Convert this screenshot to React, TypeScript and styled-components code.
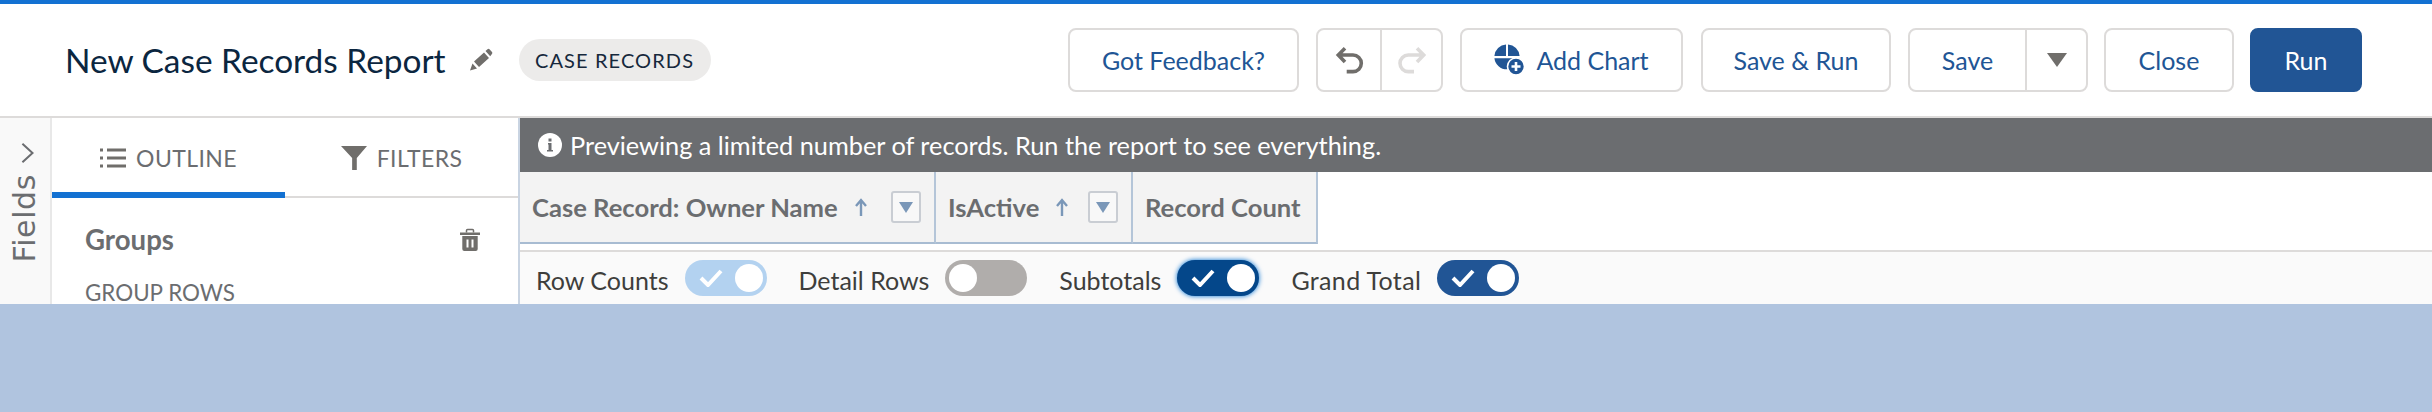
import React, { type FC, type ReactNode } from 'react'
import styled, { createGlobalStyle } from 'styled-components'

const GlobalStyle = createGlobalStyle`
	html, body {
		margin: 0;
		padding: 0;
		background: #b0c4df;
	}
	* {
		box-sizing: border-box;
	}
	body {
		font-family: Lato, 'Open Sans', sans-serif;
	}
`

const Page = styled.div`
	width: 2432px;
	height: 412px;
	background: #b0c4df;
	overflow: hidden;
`

const Builder = styled.div`
	height: 304px;
	background: #fff;
	display: flex;
	flex-direction: column;
	overflow: hidden;
`

const Header = styled.header`
	height: 118px;
	flex: none;
	border-top: 4px solid #1371d2;
	border-bottom: 2px solid #dddbda;
	display: flex;
	align-items: center;
	padding: 0 70px 0 65px;
`

const Title = styled.h1`
	margin: 0;
	font-size: 33.4px;
	font-weight: 400;
	color: #0b2640;
`

const EditIcon = styled.svg`
	width: 24px;
	height: 24px;
	margin-left: 23px;
	color: #706e6b;
`

const Pill = styled.span`
	margin-left: 26px;
	height: 42px;
	width: 192px;
	display: inline-flex;
	align-items: center;
	justify-content: center;
	border-radius: 21px;
	background: #ecebea;
	font-size: 20px;
	letter-spacing: 1.1px;
	color: #16283c;
`

const Actions = styled.div`
	margin-left: auto;
	display: flex;
	gap: 17px;
`

const Button = styled.button<{ $width: number; $primary?: boolean; $nudge?: number }>`
	width: ${({ $width }) => $width}px;
	height: 64px;
	margin-left: ${({ $nudge }) => $nudge ?? 0}px;
	padding: 0;
	display: flex;
	align-items: center;
	justify-content: center;
	gap: 10px;
	border: 2px solid ${({ $primary }) => ($primary ? '#215595' : '#dddbda')};
	border-radius: 8px;
	background: ${({ $primary }) => ($primary ? '#215595' : '#fff')};
	color: ${({ $primary }) => ($primary ? '#fff' : '#215595')};
	font-family: inherit;
	font-size: 25px;
`

const ButtonGroup = styled.div`
	height: 64px;
	display: flex;
	border: 2px solid #dddbda;
	border-radius: 8px;
	background: #fff;
`

const GroupSegment = styled.button<{ $width: number; $divided?: boolean }>`
	width: ${({ $width }) => $width}px;
	padding: 0;
	display: flex;
	align-items: center;
	justify-content: center;
	border: 0;
	border-left: ${({ $divided }) => ($divided ? '2px solid #dddbda' : '0')};
	background: transparent;
	color: #215595;
	font-family: inherit;
	font-size: 25px;
`

const Body = styled.div`
	flex: 1;
	min-height: 0;
	display: flex;
`

const Rail = styled.div`
	width: 52px;
	flex: none;
	border-right: 2px solid #e8e8e8;
	background: #f9f9f9;
	display: flex;
	flex-direction: column;
	align-items: center;
	padding: 24px 0 0 3px;
`

const RailLabel = styled.span`
	margin: 10px 0 0 -4px;
	writing-mode: vertical-rl;
	transform: rotate(180deg);
	font-family: 'DejaVu Sans', sans-serif;
	font-size: 30px;
	line-height: 30px;
	letter-spacing: 0.6px;
	color: #6b6d70;
`

const SidePanel = styled.aside`
	width: 468px;
	flex: none;
	border-right: 2px solid #c9d4e2;
	overflow: hidden;
`

const Tabs = styled.div`
	height: 80px;
	display: flex;
	align-items: flex-start;
	border-bottom: 2px solid #dddbda;
`

const Tab = styled.div<{ $active?: boolean }>`
	flex: 1;
	height: 80px;
	display: flex;
	align-items: center;
	justify-content: center;
	gap: 10px;
	box-shadow: ${({ $active }) => ($active ? 'inset 0 -6px 0 #1371d2' : 'none')};
	font-size: 23px;
	letter-spacing: 0.4px;
	color: #6b6d70;
`

const GroupsHeading = styled.div`
	display: flex;
	align-items: center;
	justify-content: space-between;
	padding: 25px 36px 0 33px;
	font-size: 27.6px;
	font-weight: 700;
	color: #6b6d70;
`

const SectionLabel = styled.div`
	margin: 27px 0 0 33px;
	font-size: 22.4px;
	line-height: 20px;
	color: #6b6d70;
`

const Preview = styled.main`
	flex: 1;
	min-width: 0;
	display: flex;
	flex-direction: column;
`

const Banner = styled.div`
	height: 54px;
	flex: none;
	padding-left: 18px;
	display: flex;
	align-items: center;
	gap: 8px;
	background: #6b6d70;
	color: #fff;
	font-size: 25.3px;
`

const TableHead = styled.div`
	height: 78px;
	flex: none;
	display: flex;
`

const HeadCell = styled.div<{ $width: number }>`
	width: ${({ $width }) => $width}px;
	height: 72px;
	padding: 0 13px 0 12px;
	display: flex;
	align-items: center;
	border-right: 2px solid #b4c5d8;
	border-bottom: 2px solid #a8bcd2;
	background: #f3f3f3;
	font-size: 25.6px;
	font-weight: 700;
	color: #6b6d70;
`

const SortArrow = styled.svg`
	width: 14px;
	height: 18px;
	margin-left: 16px;
	color: #7a97b8;
`

const MenuButton = styled.span`
	width: 30px;
	height: 32px;
	margin-left: auto;
	display: flex;
	align-items: center;
	justify-content: center;
	border: 2px solid #c9cdd3;
	border-radius: 3px;
	background: #f8f8f8;
	&::after {
		content: '';
		border-left: 7px solid transparent;
		border-right: 7px solid transparent;
		border-top: 11px solid #7a97b8;
	}
`

const Footer = styled.div`
	flex: 1;
	min-height: 0;
	border-top: 2px solid #dddbda;
	background: #fafafa;
	display: flex;
	align-items: center;
	padding: 0 0 0 16px;
	gap: 32px;
`

const ToggleField = styled.div`
	display: flex;
	align-items: center;
	gap: 16px;
`

const ToggleLabel = styled.span<{ $tracking?: number }>`
	padding-top: 3px;
	font-size: 25px;
	letter-spacing: ${({ $tracking }) => $tracking ?? 0}px;
	color: #3e3e3c;
`

const ToggleTrack = styled.span<{ $state: 'on' | 'off' | 'soft' | 'focus' }>`
	position: relative;
	width: 82px;
	height: 36px;
	display: block;
	border-radius: 18px;
	background: ${({ $state }) =>
		$state === 'off'
			? '#b0adab'
			: $state === 'soft'
				? '#b3d2f0'
				: $state === 'focus'
					? '#04478a'
					: '#215595'};
	box-shadow: ${({ $state }) => ($state === 'focus' ? '0 0 5px #0070d2' : 'none')};
`

const ToggleKnob = styled.span<{ $on: boolean }>`
	position: absolute;
	top: 4px;
	${({ $on }) => ($on ? 'right: 4px;' : 'left: 4px;')}
	width: 28px;
	height: 28px;
	border-radius: 50%;
	background: #fff;
`

const ToggleCheck = styled.svg`
	position: absolute;
	left: 14px;
	top: 9px;
	width: 24px;
	height: 18px;
	color: #fff;
`

const Toggle: FC<{
	label: string
	state: 'on' | 'off' | 'soft' | 'focus'
	tracking?: number
}> = ({ label, state, tracking }) => (
	<ToggleField>
		<ToggleLabel $tracking={tracking}>{label}</ToggleLabel>
		<ToggleTrack $state={state}>
			{state !== 'off' && (
				<ToggleCheck viewBox='0 0 24 18' fill='none' stroke='currentColor' strokeWidth='4'>
					<path d='M2 9l7 7L22 2' />
				</ToggleCheck>
			)}
			<ToggleKnob $on={state !== 'off'} />
		</ToggleTrack>
	</ToggleField>
)

const Arrow: FC = () => (
	<SortArrow viewBox='0 0 14 18' fill='none' stroke='currentColor' strokeWidth='2.4'>
		<path d='M7 18V3M2 8l5-6 5 6' />
	</SortArrow>
)

const Icon: FC<{ size: number; viewBox?: string; children: ReactNode }> = ({
	size,
	viewBox = '0 0 24 24',
	children,
}) => (
	<svg width={size} height={size} viewBox={viewBox}>
		{children}
	</svg>
)

export default function App() {
	return (
		<Page>
			<GlobalStyle />
			<Builder>
				<Header>
					<Title>New Case Records Report</Title>
					<EditIcon viewBox='0 0 24 24' fill='currentColor'>
						<path d='M5 13.5L15 4.500L20 10L10 19zM3.500 15.500L8 20.500L1 22.500zM16.500 3L18.500 1.200a1.500 1.500 0 0 1 2 .1L23 4a1.500 1.500 0 0 1-.1 2L21.200 8.200z' />
					</EditIcon>
					<Pill>CASE RECORDS</Pill>
					<Actions>
						<Button $width={231}>Got Feedback?</Button>
						<ButtonGroup>
							<GroupSegment $width={62}>
								<Icon size={30} viewBox='0 0 30 30'>
									<path
										d='M11 3.300L4.300 10L11 17M4.300 10H19a8.300 8.300 0 0 1 0 16.600H12.700'
										fill='none'
										stroke='#706e6b'
										strokeWidth='3.600'
									/>
								</Icon>
							</GroupSegment>
							<GroupSegment $width={61} $divided>
								<Icon size={30} viewBox='0 0 30 30'>
									<path
										d='M20 3.300L26.700 10L20 17M26.700 10H11.300a8.300 8.300 0 0 0 0 16.600H17'
										fill='none'
										stroke='#dddbda'
										strokeWidth='3.600'
									/>
								</Icon>
							</GroupSegment>
						</ButtonGroup>
						<Button $width={223}>
							<Icon size={32} viewBox='0 0 32 32'>
								<path
									d='M12 .4A12.700 12.700 0 0 0 .4 12H12zM14 .4V12H25.600A12.700 12.700 0 0 0 14 .4zM.4 14.200A12.700 12.700 0 0 0 25.600 14.200z'
									fill='#215595'
								/>
								<circle cx='22' cy='22.500' r='8.500' fill='#215595' stroke='#fff' strokeWidth='1.600' />
								<path d='M22 18v9M17.500 22.500h9' stroke='#fff' strokeWidth='2.600' />
							</Icon>
							Add Chart
						</Button>
						<Button $width={190} $nudge={1}>
							Save &amp; Run
						</Button>
						<ButtonGroup>
							<GroupSegment $width={115}>Save</GroupSegment>
							<GroupSegment $width={61} $divided>
								<Icon size={22} viewBox='0 0 22 16'>
									<path d='M1 1h20L11 15z' fill='#706e6b' />
								</Icon>
							</GroupSegment>
						</ButtonGroup>
						<Button $width={130} $nudge={-1}>
							Close
						</Button>
						<Button $width={112} $primary $nudge={-1}>
							Run
						</Button>
					</Actions>
				</Header>
				<Body>
					<Rail>
						<Icon size={22}>
							<path d='M7 2l11 10L7 22' fill='none' stroke='#6b6d70' strokeWidth='2.200' />
						</Icon>
						<RailLabel>Fields</RailLabel>
					</Rail>
					<SidePanel>
						<Tabs>
							<Tab $active>
								<Icon size={26} viewBox='0 0 26 22'>
									<path
										d='M0 3h3M7 3h19M0 11h3M7 11h19M0 19h3M7 19h19'
										stroke='#706e6b'
										strokeWidth='3.200'
									/>
								</Icon>
								OUTLINE
							</Tab>
							<Tab>
								<Icon size={26} viewBox='0 0 28 28'>
									<path d='M0 1h28L17 14v13h-5V14z' fill='#706e6b' />
								</Icon>
								FILTERS
							</Tab>
						</Tabs>
						<GroupsHeading>
							Groups
							<Icon size={24} viewBox='-2 -1 24 24'>
								<path d='M6.500 3.500V1.500a1 1 0 0 1 1-1h5a1 1 0 0 1 1 1v2' fill='none' stroke='#706e6b' strokeWidth='1.500' />
								<path d='M0 3.500h20v2.500H0z' fill='#706e6b' />
								<path
									d='M2.300 7h15.400v13a2 2 0 0 1-2 2H4.300a2 2 0 0 1-2-2zM6.500 10.500v8h2v-8zM11.500 10.500v8h2v-8z'
									fill='#706e6b'
									fillRule='evenodd'
								/>
							</Icon>
						</GroupsHeading>
						<SectionLabel>GROUP ROWS</SectionLabel>
					</SidePanel>
					<Preview>
						<Banner>
							<Icon size={24}>
								<circle cx='12' cy='12' r='12' fill='#fff' />
								<path d='M10 10h3.500v7H15v1.500H9V17h1.500v-5.500H10zM10.500 5.500h3v3h-3z' fill='#6b6d70' />
							</Icon>
							Previewing a limited number of records. Run the report to see everything.
						</Banner>
						<TableHead>
							<HeadCell $width={416}>
								Case Record: Owner Name
								<Arrow />
								<MenuButton />
							</HeadCell>
							<HeadCell $width={197}>
								IsActive
								<Arrow />
								<MenuButton />
							</HeadCell>
							<HeadCell $width={185}>Record Count</HeadCell>
						</TableHead>
						<Footer>
							<Toggle label='Row Counts' state='soft' />
							<Toggle label='Detail Rows' state='off' />
							<Toggle label='Subtotals' state='focus' />
							<Toggle label='Grand Total' state='on' tracking={0.35} />
						</Footer>
					</Preview>
				</Body>
			</Builder>
		</Page>
	)
}
